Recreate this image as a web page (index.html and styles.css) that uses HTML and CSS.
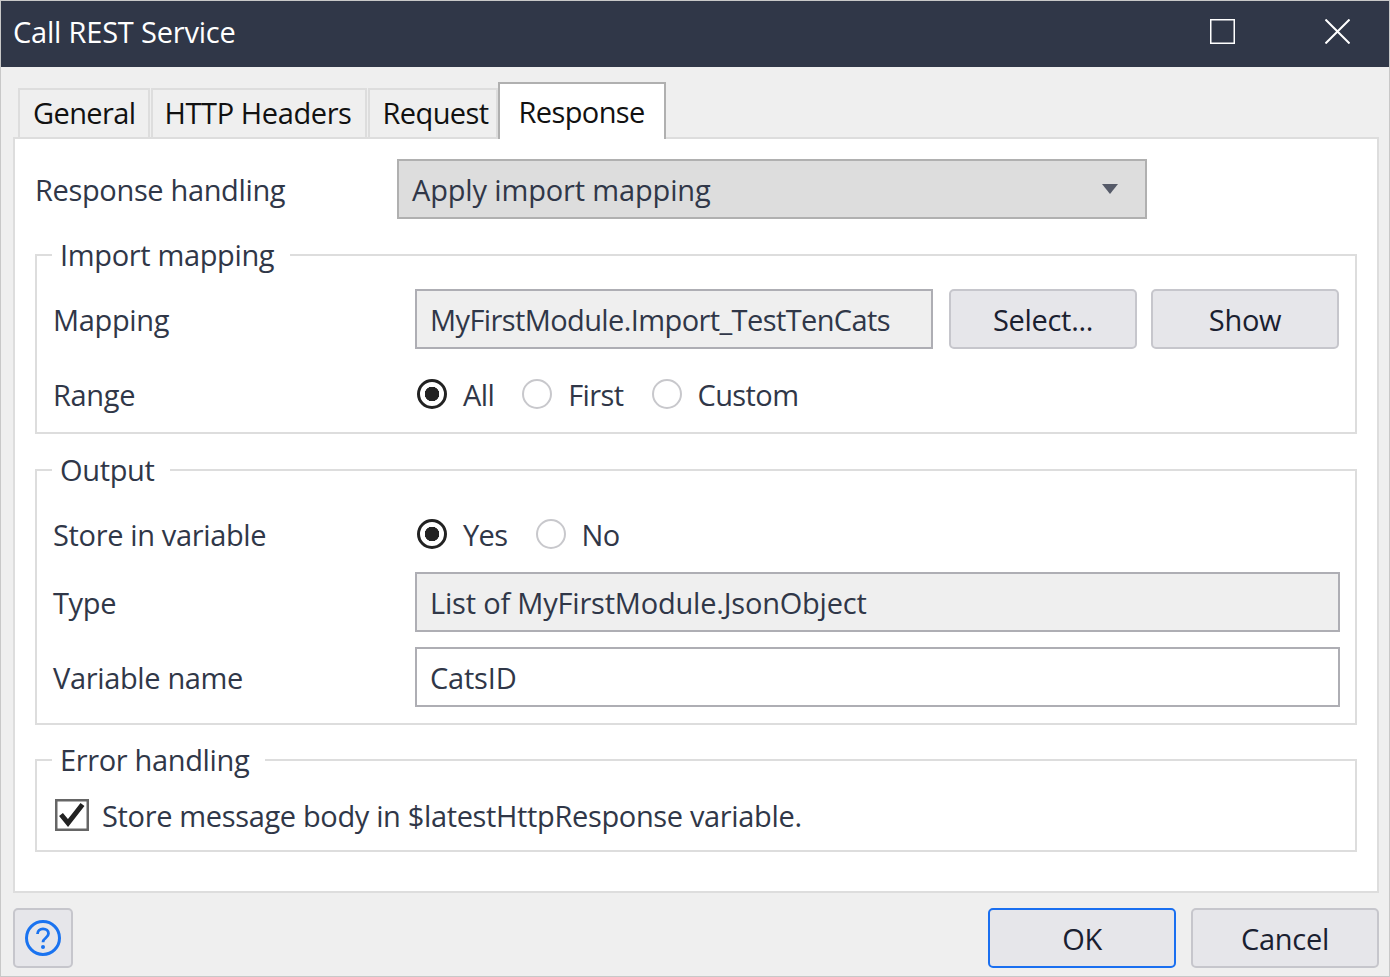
FILE: index.html
```html
<!DOCTYPE html>
<html lang="en">
<head>
  <meta charset="UTF-8">
  <meta name="viewport" content="width=device-width, initial-scale=1.0">
  <title>Call REST Service</title>
  <link rel="stylesheet" href="styles.css">
</head>
<body>

<div class="window">
  <div class="titlebar">
    <span class="title">Call REST Service</span>
    <div class="window-buttons">
      <svg class="win-icon" viewBox="0 0 25 25"><rect x="0.75" y="0.75" width="23.5" height="23.5" fill="none" stroke="#fff" stroke-width="1.5"/></svg>
      <svg class="win-icon" viewBox="0 0 25 25"><path d="M0.5 0.5L24.5 24.5M24.5 0.5L0.5 24.5" fill="none" stroke="#fff" stroke-width="2"/></svg>
    </div>
  </div>

  <div class="content">
    <div class="tabs">
      <div class="tab tab-general">General</div>
      <div class="tab tab-headers">HTTP Headers</div>
      <div class="tab tab-request">Request</div>
      <div class="tab tab-active">Response</div>
    </div>

    <div class="panel">
      <div class="top-row">
        <label class="label">Response handling</label>
        <div class="dropdown">
          <span>Apply import mapping</span>
          <svg class="dropdown-arrow" viewBox="0 0 16 10"><path d="M0 0H16L8 10Z" fill="#555a68"/></svg>
        </div>
      </div>

      <fieldset class="group group-import">
        <legend>Import mapping</legend>
        <div class="form-grid">
          <label class="label">Mapping</label>
          <div class="mapping-field">
            <input class="field field-grey field-mapping" type="text" value="MyFirstModule.Import_TestTenCats" readonly>
            <button class="btn" type="button">Select...</button>
            <button class="btn" type="button">Show</button>
          </div>
          <label class="label label-radio">Range</label>
          <div class="radios">
            <label class="radio"><input type="radio" name="range" checked>All</label>
            <label class="radio"><input type="radio" name="range">First</label>
            <label class="radio"><input type="radio" name="range">Custom</label>
          </div>
        </div>
      </fieldset>

      <fieldset class="group group-output">
        <legend>Output</legend>
        <div class="form-grid">
          <label class="label label-radio">Store in variable</label>
          <div class="radios">
            <label class="radio"><input type="radio" name="store" checked>Yes</label>
            <label class="radio"><input type="radio" name="store">No</label>
          </div>
          <label class="label">Type</label>
          <input class="field field-grey" type="text" value="List of MyFirstModule.JsonObject" readonly>
          <label class="label">Variable name</label>
          <input class="field" type="text" value="CatsID">
        </div>
      </fieldset>

      <fieldset class="group group-error">
        <legend>Error handling</legend>
        <div class="check-row">
          <svg class="checkbox" viewBox="0 0 34 32"><rect x="1.25" y="1.25" width="31.5" height="29.5" fill="#fff" stroke="#666" stroke-width="2.5"/><path d="M6 15.500L13 24L27.500 5.500" fill="none" stroke="#222" stroke-width="5"/></svg>
          <span>Store message body in $latestHttpResponse variable.</span>
        </div>
      </fieldset>
    </div>

    <div class="footer">
      <button class="btn btn-help" type="button" aria-label="Help">
        <svg viewBox="0 0 36 36" class="help-icon"><circle cx="18" cy="18" r="16.5" fill="none" stroke="#1a73f0" stroke-width="3"/><path d="M12.500 14c0-3.200 2.400-5.200 5.500-5.200s5.500 2 5.500 4.800c0 4.400-5.500 4.400-5.500 8.600" fill="none" stroke="#1a73f0" stroke-width="2.800"/><circle cx="18" cy="27" r="2" fill="#1a73f0"/></svg>
      </button>
      <div class="footer-right">
        <button class="btn btn-primary" type="button">OK</button>
        <button class="btn" type="button">Cancel</button>
      </div>
    </div>
  </div>
</div>

</body>
</html>
```

FILE: styles.css
```css
* {
  box-sizing: border-box;
}

html, body {
  margin: 0;
  height: 100%;
  overflow: hidden;
}

body {
  font-family: "Open Sans", "Noto Sans", sans-serif;
  font-size: 29px;
  letter-spacing: -0.35px;
  color: #303748;
}

.window {
  width: 1390px;
  height: 977px;
  background-color: #efefef;
  border: 1px solid #c8c8c8;
}

.titlebar {
  display: flex;
  justify-content: space-between;
  align-items: center;
  height: 66px;
  padding: 0 39px 6px 12px;
  background-color: #303748;
  color: #fff;
}

.title {
  letter-spacing: -0.2px;
}

.window-buttons {
  display: flex;
  gap: 90px;
}

.win-icon {
  width: 25px;
  height: 25px;
  display: block;
}

.content {
  padding: 16px 10px 0 12px;
}

.tabs {
  display: flex;
  height: 54px;
  padding-left: 5px;
  position: relative;
  z-index: 1;
  align-items: flex-end;
}

.tab {
  height: 49px;
  padding: 0 13px 2px;
  display: flex;
  align-items: center;
  letter-spacing: -0.6px;
  color: #111;
  border: 2px solid #ddd;
  border-bottom: none;
}

.tab + .tab {
  margin-left: 1px;
}

.tab-general {
  padding-right: 12px;
}

.tab-headers {
  padding-left: 12px;
  letter-spacing: -0.4px;
}

.tab-request {
  padding-right: 8px;
}

.tab-active {
  height: 57px;
  margin-bottom: -2px;
  padding: 0 19px 1px 18px;
  background-color: #fff;
  border-color: #b0b0b0;
}

.tab + .tab-active {
  margin-left: 0;
}

.panel {
  height: 756px;
  padding: 20px 20px 0;
  background-color: #fff;
  border: 2px solid #ddd;
}

.top-row {
  display: flex;
  align-items: center;
  height: 60px;
}

.top-row .label {
  width: 362px;
}

.dropdown {
  display: flex;
  justify-content: space-between;
  align-items: center;
  width: 750px;
  height: 60px;
  padding: 0 27px 0 13px;
  letter-spacing: -0.15px;
  background-color: #ddd;
  border: 2px solid #b0b0b0;
}

.dropdown-arrow {
  width: 16px;
  height: 10px;
}

.group {
  margin: 16px 0 0;
  padding: 0 15px 0 16px;
  min-width: 0;
  border: 2px solid #ddd;
}

.group legend {
  margin-left: -1px;
  padding: 0 16px 0 8px;
  height: 40px;
  line-height: 40px;
}

.group-import {
  padding-top: 14px;
  padding-bottom: 15px;
}

.group-output {
  padding-top: 23px;
  padding-bottom: 16px;
}

.group-error {
  margin-top: 15px;
  padding-top: 19px;
  padding-bottom: 19px;
}

.form-grid {
  display: grid;
  grid-template-columns: 362px 1fr;
  align-items: center;
  row-gap: 15px;
}

.group-import .form-grid {
  row-gap: 24px;
}

.label-radio {
  padding-bottom: 2px;
}

.mapping-field {
  display: flex;
  gap: 16px;
}

.mapping-field .btn:last-child {
  margin-left: -2px;
}

.field {
  width: 100%;
  height: 60px;
  padding: 0 13px;
  font: inherit;
  letter-spacing: -0.2px;
  color: inherit;
  background-color: #fff;
  border: 2px solid #aeaeb4;
  border-radius: 0;
  outline: none;
}

.field-grey {
  background-color: #efefef;
}

.mapping-field .field-mapping {
  width: 518px;
  letter-spacing: -0.6px;
}

.btn {
  width: 188px;
  height: 60px;
  padding: 0;
  font: inherit;
  letter-spacing: -0.3px;
  color: #1a2030;
  background-color: #e6e6ea;
  border: 2px solid #c6c6cc;
  border-radius: 5px;
}

.btn-primary {
  border-color: #1a6ff0;
}

.btn-help {
  display: flex;
  justify-content: center;
  align-items: center;
  width: 60px;
}

.help-icon {
  width: 36px;
  height: 36px;
}

.radios {
  display: flex;
  align-items: center;
  gap: 28px;
  height: 44px;
  padding: 0 0 2px 2px;
  letter-spacing: -0.6px;
}

.radio {
  display: flex;
  align-items: center;
  gap: 16px;
}

.radio input {
  appearance: none;
  width: 30px;
  height: 30px;
  margin: 0;
  background-color: #fff;
  border: 2px solid #c8c8cc;
  border-radius: 50%;
}

.radio input:checked {
  border: 3px solid #222;
  background: radial-gradient(circle, #222 0 7px, #fff 7.500px);
}

.check-row {
  display: flex;
  align-items: center;
  gap: 13px;
  height: 32px;
  padding-left: 2px;
}

.checkbox {
  width: 34px;
  height: 32px;
  flex-shrink: 0;
}

.footer {
  display: flex;
  justify-content: space-between;
  margin-top: 15px;
}

.footer-right {
  display: flex;
  gap: 15px;
}
```
